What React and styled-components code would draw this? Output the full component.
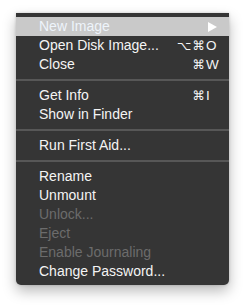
import React from "react";
import styled, { createGlobalStyle } from "styled-components";

const Global = createGlobalStyle`
  html, body { margin: 0; padding: 0; background: #ffffff; }
  body { font-family: "Liberation Sans", Arial, sans-serif; }
`;

const Page = styled.div`
  width: 246px;
  height: 306px;
  padding: 13px 0 0 16px;
  box-sizing: border-box;
`;

const Menu = styled.div`
  width: 213px;
  box-sizing: border-box;
  background: #353535;
  padding: 4px 0 4px;
  border-radius: 0 0 5px 5px;
  box-shadow: 0 6px 14px rgba(0, 0, 0, 0.28), 0 0 3px rgba(0, 0, 0, 0.18);
`;

const Row = styled.div`
  display: grid;
  grid-template-columns: 1fr auto 14px;
  align-items: center;
  height: 19px;
  padding: 0 9px 0 23px;
  font-size: 14px;
  line-height: 19px;
  color: ${(p) => (p.$disabled ? "#6c6c6c" : p.$active ? "#eef4fb" : "#f4f4f4")};
  background: ${(p) => (p.$active ? "#c9c9c9" : "transparent")};
  white-space: nowrap;
`;

const Label = styled.span``;

const Mods = styled.span`
  font-family: "DejaVu Sans", "Liberation Sans", sans-serif;
  font-size: 12.5px;
  text-align: right;
  letter-spacing: 1px;
`;

const Key = styled.span`
  font-size: 13.5px;
  text-align: left;
  display: flex;
  align-items: center;
`;

const Separator = styled.div`
  height: 2px;
  margin: 5px 0;
  background: #575757;
`;

const Arrow = () => (
  <svg width="9" height="10" viewBox="0 0 9 10" style={{ marginLeft: 2 }}>
    <path d="M0 0 L9 5 L0 10 Z" fill="#ffffff" />
  </svg>
);

const Item = ({ label, mods, keyName, disabled, active, submenu }) => (
  <Row $disabled={disabled} $active={active}>
    <Label>{label}</Label>
    <Mods>{mods || ""}</Mods>
    <Key>{submenu ? <Arrow /> : keyName || ""}</Key>
  </Row>
);

export default function App() {
  return (
    <>
      <Global />
      <Page>
        <Menu>
          <Item label="New Image" active submenu />
          <Item label="Open Disk Image..." mods="⌥⌘" keyName="O" />
          <Item label="Close" mods="⌘" keyName="W" />
          <Separator />
          <Item label="Get Info" mods="⌘" keyName="I" />
          <Item label="Show in Finder" />
          <Separator />
          <Item label="Run First Aid..." />
          <Separator />
          <Item label="Rename" />
          <Item label="Unmount" />
          <Item label="Unlock..." disabled />
          <Item label="Eject" disabled />
          <Item label="Enable Journaling" disabled />
          <Item label="Change Password..." />
        </Menu>
      </Page>
    </>
  );
}
